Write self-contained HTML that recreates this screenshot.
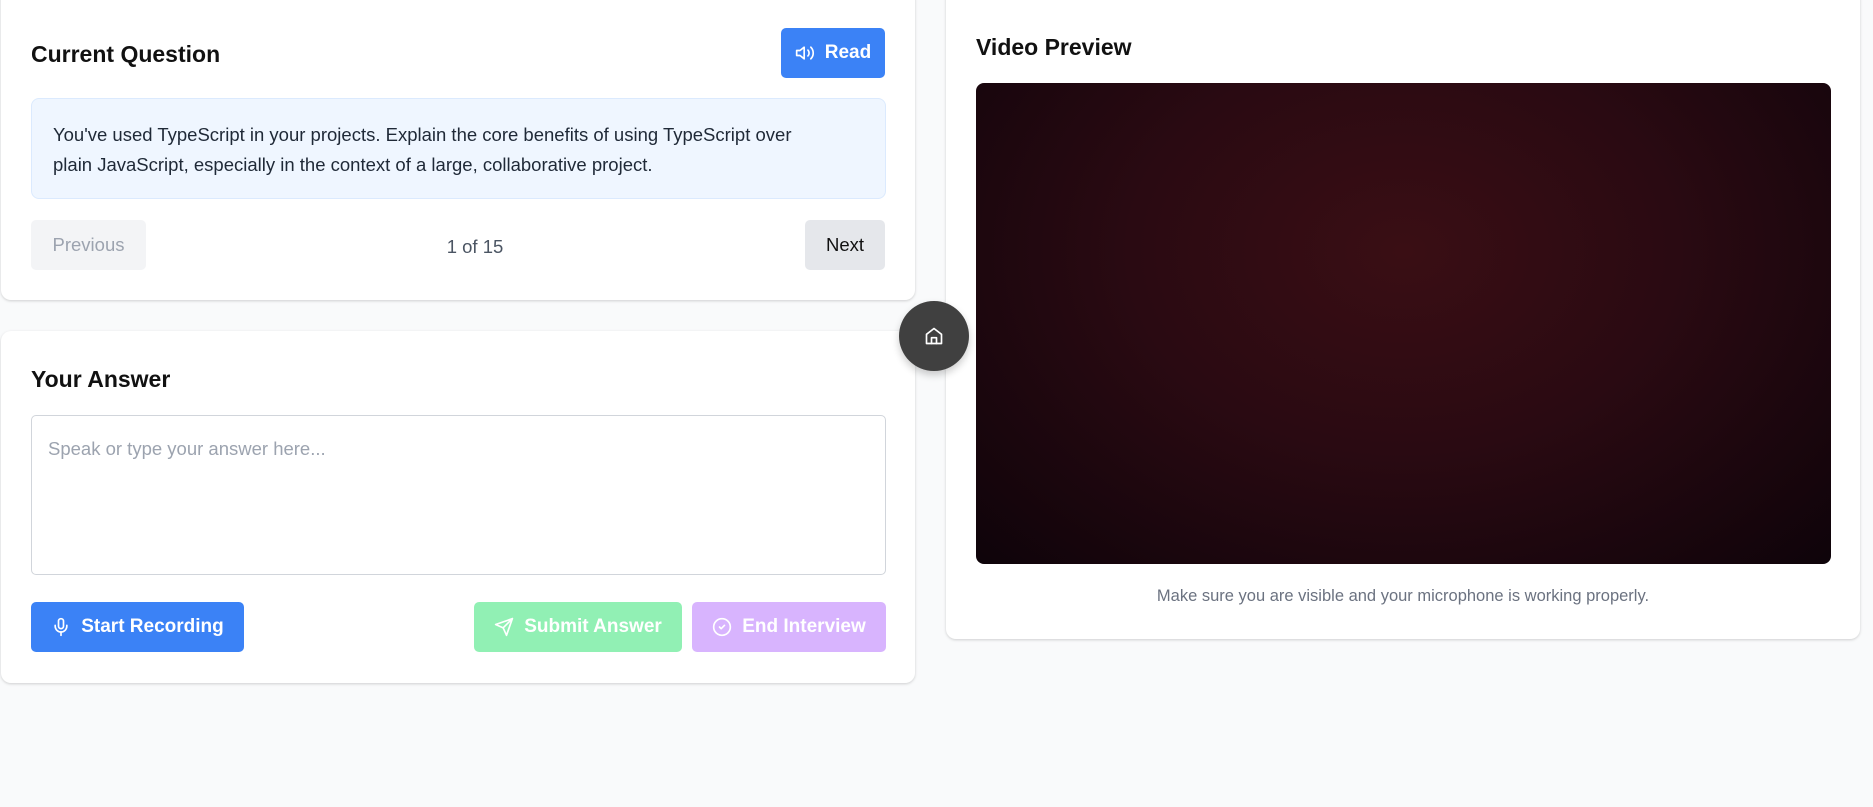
<!DOCTYPE html>
<html><head><meta charset="utf-8"><style>
*{box-sizing:border-box;margin:0;padding:0}
body{width:1873px;height:807px;background:#f9fafb;font-family:"Liberation Sans",sans-serif;position:relative;overflow:hidden;color:#111}
.card{position:absolute;background:#fff;border-radius:10px;box-shadow:0 1px 3px rgba(0,0,0,.12),0 1px 2px rgba(0,0,0,.06)}
.h{position:absolute;font-size:23px;font-weight:600;color:#111}
.btn{position:absolute;border-radius:5px;display:flex;align-items:center;justify-content:center;font-size:19px;font-weight:bold;color:#fff;gap:10px}
</style></head><body>
<div class="card" style="left:1px;top:-12px;width:914px;height:312px"></div>
<div class="h" style="left:31px;top:41px">Current Question</div>
<div class="btn" style="left:781px;top:28px;width:104px;height:50px;background:#3b82f6">
<svg width="20" height="20" viewBox="0 0 24 24" fill="none" stroke="#fff" stroke-width="2" stroke-linecap="round" stroke-linejoin="round"><path d="M11 5 6 9H2v6h4l5 4z"/><path d="M15.5 8.5a5 5 0 0 1 0 7"/><path d="M19 5a10 10 0 0 1 0 14"/></svg>Read</div>
<div style="position:absolute;left:31px;top:98px;width:855px;height:101px;background:#eff6ff;border:1px solid #dbeafe;border-radius:8px;padding:21px 60px 21px 21px;font-size:18.5px;line-height:30px;color:#1f2937">You've used TypeScript in your projects. Explain the core benefits of using TypeScript over plain JavaScript, especially in the context of a large, collaborative project.</div>
<div class="btn" style="left:31px;top:220px;width:115px;height:50px;background:#f3f4f6;color:#9ca3af;font-weight:normal;font-size:18.5px">Previous</div>
<div style="position:absolute;left:400px;top:236px;width:150px;text-align:center;font-size:18.5px;color:#4b5563">1 of 15</div>
<div class="btn" style="left:805px;top:220px;width:80px;height:50px;background:#e5e7eb;color:#111;font-weight:normal;font-size:18.5px">Next</div>

<div class="card" style="left:1px;top:331px;width:914px;height:352px"></div>
<div class="h" style="left:31px;top:366px">Your Answer</div>
<div style="position:absolute;left:31px;top:415px;width:855px;height:160px;border:1px solid #d1d5db;border-radius:5px;padding:22px 16px;font-size:18.5px;color:#9ca3af">Speak or type your answer here...</div>
<div class="btn" style="left:31px;top:602px;width:213px;height:50px;background:#3b82f6">
<svg width="20" height="20" viewBox="0 0 24 24" fill="none" stroke="#fff" stroke-width="2" stroke-linecap="round" stroke-linejoin="round"><rect x="9" y="2" width="6" height="12" rx="3"/><path d="M19 10v1a7 7 0 0 1-14 0v-1"/><path d="M12 18v4"/></svg>Start Recording</div>
<div class="btn" style="left:474px;top:602px;width:208px;height:50px;background:#86efac;opacity:.9">
<svg width="20" height="20" viewBox="0 0 24 24" fill="none" stroke="#fff" stroke-width="2" stroke-linecap="round" stroke-linejoin="round"><path d="M22 2 11 13"/><path d="M22 2 15 22l-4-9-9-4z"/></svg>Submit Answer</div>
<div class="btn" style="left:692px;top:602px;width:194px;height:50px;background:#d8b4fe">
<svg width="20" height="20" viewBox="0 0 24 24" fill="none" stroke="#fff" stroke-width="2" stroke-linecap="round" stroke-linejoin="round"><circle cx="12" cy="12" r="10"/><path d="m9 12 2 2 4-4"/></svg>End Interview</div>

<div class="card" style="left:946px;top:-12px;width:914px;height:651px"></div>
<div class="h" style="left:976px;top:34px">Video Preview</div>
<div style="position:absolute;left:976px;top:83px;width:855px;height:481px;border-radius:8px;background:radial-gradient(ellipse at 50% 35%,#3a0e14 0%,#2a0a12 45%,#16050c 85%,#0e040a 100%)"></div>
<div style="position:absolute;left:946px;top:587px;width:914px;text-align:center;font-size:16.5px;color:#6b7280">Make sure you are visible and your microphone is working properly.</div>

<div style="position:absolute;left:899px;top:301px;width:70px;height:70px;border-radius:50%;background:#404040;box-shadow:0 4px 8px rgba(0,0,0,.2);display:flex;align-items:center;justify-content:center">
<svg width="20" height="20" viewBox="0 0 24 24" fill="none" stroke="#fff" stroke-width="2" stroke-linecap="round" stroke-linejoin="round"><path d="M3 10 12 3l9 7v11H3z"/><path d="M9 21v-7h6v7"/></svg></div>
</body></html>
